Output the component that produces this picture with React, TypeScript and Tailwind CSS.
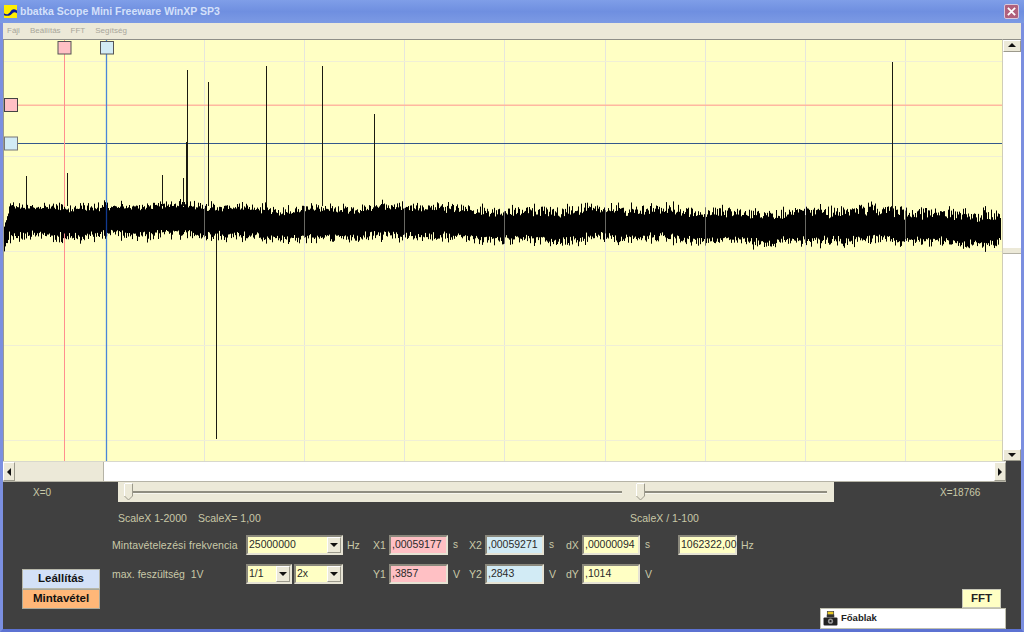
import React from "react";

const F = "font-['Liberation_Sans',Arial,sans-serif]";

function wavePath() {
  let s = 12345;
  const r = () => {
    s = (s * 1664525 + 1013904223) >>> 0;
    return s / 4294967296;
  };
  const lerp = (a: number, b: number, t: number) => a + (b - a) * t;
  let d = "";
  for (let x = 9.5; x < 1001; x += 1) {
    const t = x / 1000;
    const w = 1.6 * Math.sin(x / 37) + 1.2 * Math.sin(x / 11 + 1);
    const cT = lerp(207, 218, t) + w;
    const cB = lerp(232, 240, t) + w;
    for (let k = 0; k < 2; k++) {
      const u = r();
      const v = r();
      const top = cT - u * u * lerp(5, 12, t) + r() * 4;
      const bot = cB + v * v * 8 - r() * 4;
      d += `M${x} ${top.toFixed(1)}V${bot.toFixed(1)}`;
    }
    if (r() > 0.88) d += `M${x} ${(cT - 4 - r() * lerp(3, 10, t)).toFixed(1)}V${(cB + 3 + r() * 7).toFixed(1)}`;
  }
  for (let x = 4.5; x < 9; x += 1) {
    const t = (x - 4) / 5;
    d += `M${x} ${(lerp(226, 212, t) + r() * 3).toFixed(1)}V${(lerp(250, 236, t) + r() * 3).toFixed(1)}`;
  }
  return d;
}

const WAVE = wavePath();
const GX = [204.5, 304.5, 404.5, 504.5, 605.5, 705.5, 805.5, 905.5];
const GY = [61.5, 156.5, 251.5, 345.5, 440.5];
const SPIKES: [number, number, number][] = [
  [187.5, 70, 206],
  [208.5, 82, 206],
  [266.5, 66, 206],
  [322.5, 66, 206],
  [374.5, 114, 206],
  [892.5, 62, 212],
  [26.5, 176, 206],
  [67.5, 173, 206],
  [162.5, 175, 206],
  [186.5, 142, 206],
  [183.5, 178, 206],
  [216.5, 230, 439],
];

function Plot() {
  return (
    <svg className="block w-[999px] h-[421px] bg-[#ffffc4]" viewBox="3 40 999 421" width={999} height={421}>
      {GX.map((x) => (
        <line key={x} x1={x} x2={x} y1={40} y2={461} stroke="#e6e6dc" strokeWidth={1} />
      ))}
      {GY.map((y) => (
        <line key={y} x1={3} x2={1002} y1={y} y2={y} stroke="#f0efd6" strokeWidth={1.2} />
      ))}
      <line x1={3} x2={1002} y1={105.2} y2={105.2} stroke="#ffb8a0" strokeWidth={1.6} />
      <line x1={3} x2={1002} y1={143.5} y2={143.5} stroke="#34588c" strokeWidth={1} />
      <line x1={64.5} x2={64.5} y1={40} y2={461} stroke="#ff8f8f" strokeWidth={1} />
      <line x1={106.5} x2={106.5} y1={40} y2={461} stroke="#4a86d8" strokeWidth={1.3} />
      {SPIKES.map(([x, a, b]) => (
        <line key={x} x1={x} x2={x} y1={a} y2={b} stroke="#1a1a10" strokeWidth={1} />
      ))}
      <path d={WAVE} stroke="#000" strokeWidth={1} fill="none" />
      {GX.map((x) => (
        <line key={x} x1={x} x2={x} y1={200} y2={250} stroke="#e6e6dc" strokeWidth={1} opacity={0.45} />
      ))}
      <line x1={106.5} x2={106.5} y1={205} y2={236} stroke="#123a90" strokeWidth={1.3} />
      <line x1={3.5} x2={3.5} y1={40} y2={461} stroke="#9a9a90" strokeWidth={1} />
      <rect x={58} y={41.5} width={13} height={12.5} fill="#ffc0c4" stroke="#555" strokeWidth={1} />
      <rect x={100.5} y={41.5} width={13} height={12.5} fill="#d2ebf5" stroke="#555" strokeWidth={1} />
      <rect x={4.5} y={98.5} width={13} height={13} fill="#ffc0c4" stroke="#444" strokeWidth={1} />
      <rect x={4.5} y={137} width={13} height={13} fill="#d2ebf5" stroke="#777" strokeWidth={1} />
    </svg>
  );
}

function Arrow({ dir }: { dir: "u" | "d" | "l" | "r" }) {
  const p = { u: "0,5 8,5 4,1", d: "0,2 8,2 4,6", l: "6,0 6,8 2,4", r: "2,0 2,8 6,4" }[dir];
  return (
    <svg width={8} height={8} viewBox="0 0 8 8" className="block">
      <polygon points={p} fill="#111" />
    </svg>
  );
}

const btn = "flex items-center justify-center bg-[#ece9d8] border-r border-b border-r-[#9c9a8c] border-b-[#9c9a8c] border-t border-l border-t-white border-l-white";
const inset = "border-2 border-t-[#8a887c] border-l-[#8a887c] border-b-[#e6e3d4] border-r-[#e6e3d4]";

function Field({ w, bg, children }: { w: string; bg: string; children: string }) {
  return (
    <div className={`${w} ${bg} ${inset} h-[20px] shrink-0 text-[10.5px] leading-[14px] pl-[1px] text-[#2a2a2a] whitespace-nowrap`}>
      {children}
    </div>
  );
}

function Select({ w, children }: { w: string; children: string }) {
  return (
    <div className={`${w} ${inset} h-[20px] shrink-0 bg-[#ffffc4] flex items-stretch text-[10.5px] leading-[14px] text-[#2a2a2a]`}>
      <span className="flex-1 pl-[1px] overflow-hidden whitespace-nowrap">{children}</span>
      <span className={`${btn} w-[14px]`}>
        <Arrow dir="d" />
      </span>
    </div>
  );
}

const base = "leading-[14px] text-[#c9c9a8] whitespace-nowrap shrink-0";
const lbl = `${base} text-[10.5px]`;
const sm = `${base} text-[10px]`;

function Thumb() {
  return (
    <svg width={9} height={18} viewBox="0 0 9 18" className="block shrink-0">
      <polygon points="0.5,0.5 8.5,0.5 8.5,13 4.5,17 0.5,13" fill="#ece9d8" stroke="#9c9a8c" />
      <polyline points="0.5,13 0.5,0.5 8.5,0.5" fill="none" stroke="#fff" />
    </svg>
  );
}

function Groove({ w }: { w: string }) {
  return <div className={`${w} h-[3px] border-t-2 border-[#8f8d80] bg-[#f7f6ee] shrink-0`} />;
}

export default function App() {
  return (
    <div className={`${F} w-[1024px] h-[632px] overflow-hidden bg-[#5c72d2] flex flex-col`}>
      {/* title bar */}
      <div className="h-[23px] shrink-0 flex items-center bg-gradient-to-b from-[#7f9ee8] via-[#6f8fe0] to-[#7c9ae4] pl-[4px] pr-[5px]">
        <svg width={13} height={13} viewBox="0 0 14 14" className="block shrink-0">
          <rect width={14} height={14} fill="#ffee00" />
          <path d="M0 9 C3 11 5 10 7 7 S11 4 14 6 V9 C11 7 10 8 8 10 S3 12 0 11Z" fill="#0a1a9a" />
        </svg>
        <span className="ml-[3px] text-[10.5px] font-bold text-[#d4e0fa] whitespace-nowrap">
          bbatka Scope Mini Freeware WinXP SP3
        </span>
        <div className="ml-auto w-[15px] h-[15px] rounded-[2px] bg-[#b0607c] border border-[#d8c8dc] flex items-center justify-center">
          <svg width={9} height={9} viewBox="0 0 10 10">
            <path d="M1 1 L9 9 M9 1 L1 9" stroke="#fff" strokeWidth={2} />
          </svg>
        </div>
      </div>
      {/* window body */}
      <div className="flex-1 min-h-0 flex flex-col border-x-[3px] border-x-[#7b8fe0] border-b-[3px] border-b-[#5c72d2] bg-[#404040]">
        {/* menu */}
        <div className="h-[16px] shrink-0 bg-[#ece9d8] flex items-center gap-[10px] pl-[4px] text-[8px] leading-none text-[#a8a69a]">
          <span>Fájl</span>
          <span>Beállítás</span>
          <span>FFT</span>
          <span>Segítség</span>
        </div>
        {/* plot + vertical scroll */}
        <div className="flex h-[422px] shrink-0">
          <div className="border-t border-[#8f8f88] h-[422px]">
            <Plot />
          </div>
          <div className="w-[19px] flex flex-col bg-white border-t border-[#8f8f88] border-l border-l-[#d0cdb8]">
            <div className={`${btn} h-[12px]`}>
              <Arrow dir="u" />
            </div>
            <div className="h-[196px]" />
            <div className="h-[6px] bg-[#ece9d8] border-b border-[#b5b3a6]" />
            <div className="flex-1" />
            <div className={`${btn} h-[12px]`}>
              <Arrow dir="d" />
            </div>
          </div>
        </div>
        {/* horizontal scroll */}
        <div className="h-[21px] shrink-0 w-[1003px] flex bg-white border-t border-[#d8d8cc] border-b border-b-[#b5b3a6]">
          <div className={`${btn} w-[12px]`}>
            <Arrow dir="l" />
          </div>
          <div className="w-[89px] bg-[#ece9d8] border-r border-[#b5b3a6]" />
          <div className="flex-1" />
          <div className={`${btn} w-[12px]`}>
            <Arrow dir="r" />
          </div>
        </div>
        {/* slider row */}
        <div className="h-[21px] shrink-0 flex items-start">
          <span className={`${sm} w-[115px] pl-[30px] mt-[4px]`}>X=0</span>
          <div className="w-[716px] h-[20px] bg-[#ece9d8] flex items-center pl-[6px] shrink-0">
            <Thumb />
            <Groove w="w-[489px]" />
            <div className="w-[14px]" />
            <Thumb />
            <Groove w="w-[182px]" />
          </div>
          <span className={`${sm} ml-[106px] mt-[4px]`}>X=18766</span>
        </div>
        {/* scale row */}
        <div className="h-[14px] mt-[8px] shrink-0 flex pl-[115px]">
          <span className={`${lbl} w-[80px]`}>ScaleX 1-2000</span>
          <span className={`${lbl} w-[432px]`}>ScaleX= 1,00</span>
          <span className={lbl}>ScaleX / 1-100</span>
        </div>
        {/* controls */}
        <div className="flex flex-1 min-h-0">
          <div className="w-[109px] shrink-0 pl-[19px] pt-[44px]">
            <div className="w-[78px] h-[20px] bg-[#d3e1f7] border border-[#b8b8aa] flex items-center justify-center text-[11.5px] font-bold text-[#111]">Leállítás</div>
            <div className="w-[78px] h-[20px] bg-[#ffb778] border border-[#a8a89a] flex items-center justify-center text-[11.5px] font-bold text-[#111]">Mintavétel</div>
          </div>
          <div className="flex-1 flex flex-col pt-[10px]">
            <div className="flex items-center h-[20px]">
              <span className={`${lbl} w-[134px] tracking-[0.1px]`}>Mintavételezési frekvencia</span>
              <Select w="w-[97px]">25000000</Select>
              <span className={`${lbl} w-[30px] pl-[4px]`}>Hz</span>
              <span className={`${lbl} w-[16px]`}>X1</span>
              <Field w="w-[59px]" bg="bg-[#ffc0c4]">,00059177</Field>
              <span className={`${sm} w-[21px] pl-[5px]`}>s</span>
              <span className={`${lbl} w-[16px]`}>X2</span>
              <Field w="w-[59px]" bg="bg-[#d2ebf5]">,00059271</Field>
              <span className={`${sm} w-[22px] pl-[5px]`}>s</span>
              <span className={`${lbl} w-[16px]`}>dX</span>
              <Field w="w-[58px]" bg="bg-[#ffffc4]">,00000094</Field>
              <span className={`${sm} w-[38px] pl-[5px]`}>s</span>
              <Field w="w-[59px]" bg="bg-[#ffffc4]">1062322,00</Field>
              <span className={`${lbl} pl-[4px]`}>Hz</span>
            </div>
            <div className="flex items-center h-[20px] mt-[9px]">
              <span className={`${lbl} w-[134px]`}>max. feszültség&nbsp; 1V</span>
              <Select w="w-[46px]">1/1</Select>
              <div className="w-[2px]" />
              <Select w="w-[49px]">2x</Select>
              <span className={`${lbl} w-[30px]`} />
              <span className={`${lbl} w-[16px]`}>Y1</span>
              <Field w="w-[59px]" bg="bg-[#ffc0c4]">,3857</Field>
              <span className={`${lbl} w-[21px] pl-[5px]`}>V</span>
              <span className={`${lbl} w-[16px]`}>Y2</span>
              <Field w="w-[59px]" bg="bg-[#d2ebf5]">,2843</Field>
              <span className={`${lbl} w-[22px] pl-[5px]`}>V</span>
              <span className={`${lbl} w-[16px]`}>dY</span>
              <Field w="w-[58px]" bg="bg-[#ffffc4]">,1014</Field>
              <span className={`${lbl} pl-[5px]`}>V</span>
            </div>
            <div className="flex justify-end pr-[20px] mt-[5px]">
              <div className="w-[39px] h-[19px] bg-[#ffffc4] border border-[#c8c8b8] flex items-center justify-center text-[11.5px] font-bold text-[#222]">FFT</div>
            </div>
            <div className="flex justify-end pr-[15px]">
              <div className="w-[186px] h-[21px] bg-white border border-[#c0c0b0] flex items-center pl-[2px] gap-[3px] text-[9.5px] font-bold text-[#222]">
                <svg width={15} height={15} viewBox="0 0 14 14" className="block shrink-0">
                  <rect x={4} y={0.5} width={6} height={3} fill="#e8c820" stroke="#333" strokeWidth={0.6} />
                  <rect x={3.5} y={3.5} width={7} height={2.5} fill="#333" />
                  <rect x={0.5} y={6} width={13} height={7.5} rx={1} fill="#222" />
                  <circle cx={7} cy={9.5} r={2.4} fill="#999" />
                  <circle cx={7} cy={9.5} r={1} fill="#222" />
                </svg>
                Főablak
              </div>
            </div>
          </div>
        </div>
      </div>
    </div>
  );
}
